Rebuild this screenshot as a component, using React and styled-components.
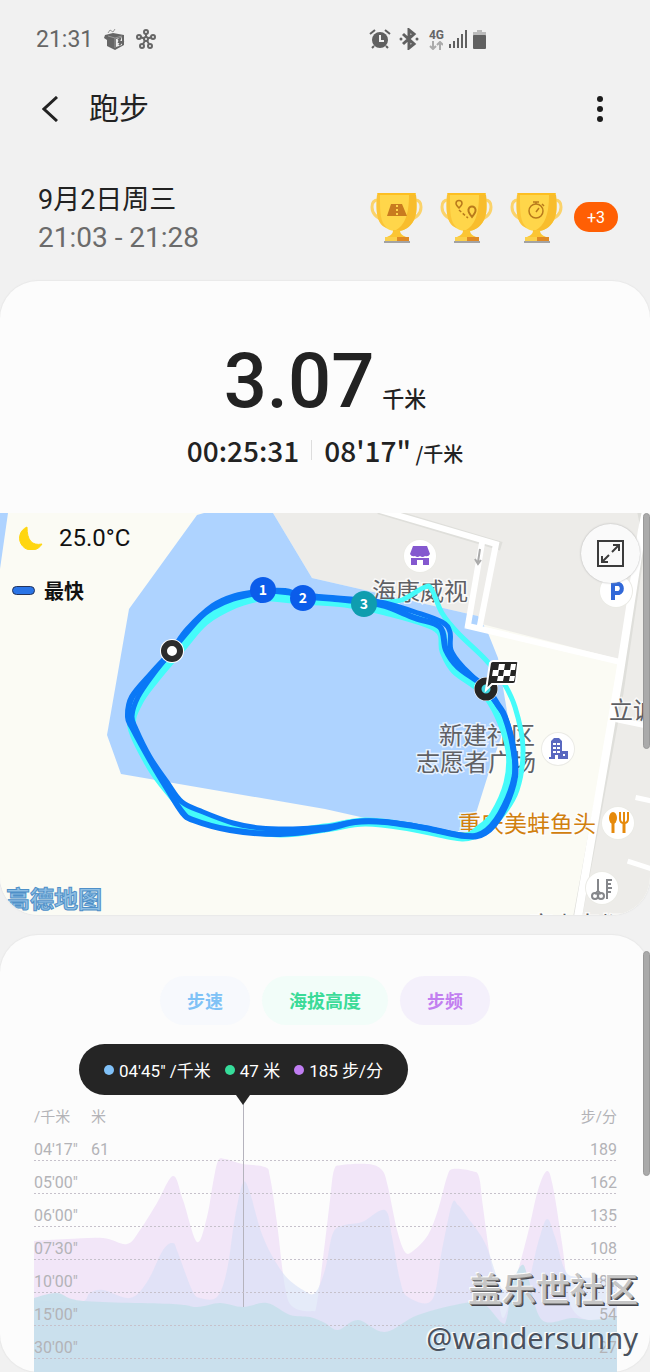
import React from 'react'
import styled, { createGlobalStyle } from 'styled-components'

const GlobalStyle = createGlobalStyle`
  * { box-sizing: border-box; }
  body {
    margin: 0;
    background: #f1f1f1;
    color: #222;
    font-family: Roboto, "Noto Sans CJK SC", sans-serif;
  }
  button { font-family: inherit; border: none; padding: 0; background: none; cursor: pointer; }
  h1, p { margin: 0; font-weight: 400; }
`

const Page = styled.main`
  position: relative;
  overflow: hidden;
`

const StatusBar = styled.div`
  display: flex;
  justify-content: space-between;
  align-items: center;
  padding: 24px 163px 0 36px;
  height: 54px;
  color: #666;
  font-size: 23px;
`

const StatusGroup = styled.div`
  display: flex;
  align-items: center;
  gap: ${({ $gap }) => $gap}px;
`

const Network = styled.span`
  display: flex;
  flex-direction: column;
  align-items: center;
  font-size: 12px;
  line-height: 12px;
  font-weight: 700;
  margin-left: 2px;
`

const Header = styled.header`
  display: flex;
  align-items: center;
  height: 60px;
  margin-top: 25px;
  padding: 0 36px;
`

const IconButton = styled.button`
  display: flex;
  align-items: center;
  justify-content: center;
  width: 28px;
  height: 40px;
`

const Title = styled.h1`
  flex: 1;
  margin-left: 25px;
  font-size: 30px;
  line-height: 46px;
`

const Summary = styled.section`
  display: flex;
  justify-content: space-between;
  align-items: center;
  margin-top: 42px;
  padding: 0 32px 0 38px;
`

const DateText = styled.p`
  font-size: 27px;
  line-height: 38px;
`

const TimeRange = styled.p`
  font-size: 28px;
  line-height: 38px;
  color: #6b6b6b;
`

const Awards = styled.div`
  display: flex;
  align-items: center;
  gap: 17px;
  margin-bottom: 4px;
`

const MoreAwards = styled.button`
  width: 44px;
  height: 30px;
  margin-left: -6px;
  border-radius: 15px;
  background: #ff5f04;
  color: #fff;
  font-size: 16px;
`

const Card = styled.section`
  position: relative;
  margin-top: ${({ $top }) => $top}px;
  border-radius: 38px;
  background: #fcfcfc;
  box-shadow: 0 0 1px 1px #e9e9e9;
`

const Result = styled.div`
  display: flex;
  flex-direction: column;
  align-items: center;
  height: 232px;
  padding-top: 58px;
`

const Distance = styled.p`
  display: flex;
  align-items: baseline;
  gap: 8px;
  font-size: 76px;
  line-height: 84px;
  font-weight: 500;
`

const Unit = styled.span`
  font-family: "Noto Sans CJK SC", sans-serif;
  font-size: ${({ $size }) => $size}px;
  line-height: 28px;
  font-weight: 500;
`

const Pace = styled.div`
  display: flex;
  align-items: baseline;
  margin-top: 9px;
  font-family: "Noto Sans CJK SC", sans-serif;
  font-size: 28px;
  line-height: 36px;
  font-weight: 500;
`

const Divider = styled.span`
  align-self: center;
  width: 1px;
  height: 20px;
  margin: 0 12px;
  background: #ddd;
`

const MapBox = styled.div`
  position: relative;
  height: 402px;
  overflow: hidden;
  border-radius: 0 0 38px 38px;
`

const MapCanvas = styled.svg`
  display: block;
  width: 100%;
  height: 100%;
  font-family: "Noto Sans CJK SC", sans-serif;
`

const Legend = styled.div`
  position: absolute;
  left: 12px;
  top: 10px;
  color: #111;
`

const Weather = styled.div`
  display: flex;
  align-items: center;
  gap: 16px;
  height: 30px;
  padding-left: 7px;
  font-size: 24px;
`

const Fastest = styled.div`
  display: flex;
  align-items: center;
  gap: 9px;
  height: 30px;
  margin-top: 22px;
  font-size: 20px;
  font-weight: 700;
`

const FastMark = styled.span`
  width: 23px;
  height: 9px;
  border: 1px solid #24345c;
  border-radius: 5px;
  background: #2a74e6;
`

const ExpandButton = styled.button`
  position: absolute;
  top: 11px;
  right: 10px;
  display: flex;
  align-items: center;
  justify-content: center;
  width: 59px;
  height: 59px;
  border-radius: 50%;
  background: #fafafa;
  box-shadow: 0 0 2px #aaa;
`

const ScrollThumb = styled.div`
  position: absolute;
  right: 0;
  top: ${({ $top }) => $top}px;
  width: 7px;
  height: ${({ $height }) => $height}px;
  border: 1px solid #999;
  border-radius: 4px;
  background: #aaa;
`

const Tabs = styled.div`
  display: flex;
  justify-content: center;
  gap: 12px;
  padding-top: 41px;
`

const Tab = styled.button`
  height: 49px;
  padding: 0 27px 2px;
  border-radius: 25px;
  font-size: 18px;
  font-weight: 700;
  color: ${({ $color }) => $color};
  background: ${({ $bg }) => $bg};
`

const Chart = styled.div`
  position: relative;
  margin: 19px 33px 0 34px;
  padding-top: 56px;
`

const Bubble = styled.div`
  position: absolute;
  left: 45px;
  top: 0;
  display: flex;
  align-items: center;
  justify-content: center;
  gap: 14px;
  width: 329px;
  height: 51px;
  border-radius: 26px;
  background: #252525;
  color: #fff;
  font-size: 17px;

  &::after {
    content: '';
    position: absolute;
    left: 157px;
    top: 51px;
    border: 7px solid transparent;
    border-top: 10px solid #252525;
    border-bottom: none;
  }
`

const Reading = styled.span`
  display: flex;
  align-items: center;
  gap: 5px;

  &::before {
    content: '';
    width: 10px;
    height: 10px;
    border-radius: 50%;
    background: ${({ $color }) => $color};
  }
`

const Plot = styled.div`
  display: grid;

  > * { grid-area: 1 / 1; }
`

const Areas = styled.svg`
  width: 100%;
  height: 272px;
`

const Scale = styled.div`
  position: relative;
  padding: 6px 0 13px;
  color: #b3b3b7;
  font-size: 16px;
`

const ScaleRow = styled.div`
  display: grid;
  grid-template-columns: 57px 1fr auto;
  align-items: end;
  height: 33px;
  padding-bottom: 1px;
  line-height: 20px;
  background: repeating-linear-gradient(to right, #c6c1cb 0 2px, transparent 2px 4px) bottom / 100% 1px no-repeat;
`

const UnitRow = styled(ScaleRow)`
  height: 22px;
  font-size: 15px;
  background: none;
`

const Watermark = styled.div`
  position: absolute;
  right: 12px;
  bottom: 12px;
  text-align: right;
`

const Community = styled.p`
  margin-bottom: 6px;
  font-family: "Noto Sans CJK SC", sans-serif;
  font-size: 34px;
  line-height: 44px;
  font-weight: 500;
  color: #c6c6c6;
  text-shadow: -1px -1px 0 #fff, 1px 1px 0 #777, 2px 2px 0 #43434a;
`

const Author = styled.p`
  font-family: "Noto Sans", sans-serif;
  font-size: 29px;
  line-height: 44px;
  color: #4a525e;
  text-shadow: -1px -1px 0 #fff, -2px -1px 0 #e8f2f8;
`

// smooth line through a list of points
const curve = (pts) => {
  let d = `M${pts[0][0]} ${pts[0][1]}`
  for (let i = 0; i < pts.length - 1; i++) {
    const a = pts[i - 1] || pts[i]
    const b = pts[i]
    const c = pts[i + 1]
    const e = pts[i + 2] || c
    d += `C${b[0] + (c[0] - a[0]) / 6} ${b[1] + (c[1] - a[1]) / 6} ${c[0] - (e[0] - b[0]) / 6} ${c[1] - (e[1] - b[1]) / 6} ${c[0]} ${c[1]}`
  }
  return d
}

const area = (pts) => `${curve(pts)}L583 272L0 272Z`

const cadence = [[0, 141], [33, 139], [69, 138], [93, 144], [106, 130], [123, 103], [139, 76], [149, 100], [163, 142], [173, 117], [179, 83], [184, 61], [191, 59], [209, 64], [231, 67], [236, 77], [243, 123], [251, 187], [259, 207], [278, 211], [283, 203], [291, 142], [296, 100], [300, 70], [308, 65], [334, 64], [348, 70], [354, 87], [363, 130], [371, 152], [379, 151], [394, 135], [404, 110], [413, 77], [419, 69], [438, 71], [445, 77], [449, 107], [456, 157], [463, 190], [468, 217], [473, 210], [481, 182], [494, 133], [504, 90], [513, 71], [519, 87], [528, 143], [534, 190], [539, 210], [554, 220], [583, 220]]
const speed = [[0, 200], [46, 202], [56, 193], [69, 190], [96, 198], [113, 182], [129, 150], [139, 143], [144, 153], [158, 190], [166, 198], [183, 197], [193, 170], [201, 117], [209, 83], [216, 93], [229, 137], [249, 173], [269, 190], [281, 193], [291, 170], [299, 133], [311, 125], [328, 122], [351, 110], [358, 137], [366, 180], [374, 197], [398, 200], [408, 150], [418, 104], [424, 105], [434, 118], [451, 143], [464, 180], [471, 190], [491, 190], [504, 143], [513, 119], [521, 137], [531, 170], [544, 177], [583, 178]]
const altitude = [[0, 198], [23, 193], [49, 201], [139, 204], [163, 207], [186, 203], [209, 207], [233, 203], [256, 215], [276, 217], [291, 223], [304, 230], [324, 220], [351, 232], [384, 215], [431, 203], [450, 204], [468, 223], [473, 217], [479, 183], [488, 165], [494, 177], [508, 220], [538, 218], [558, 220], [583, 217]]

const lapOne = [[262, 78], [235, 83], [213, 93], [187, 117], [172, 138], [152, 160], [132, 184], [128, 204], [133, 216], [150, 247], [168, 277], [182, 299], [193, 307], [230, 317], [280, 321], [325, 316], [355, 309], [385, 309], [425, 315], [465, 323], [485, 320], [502, 300], [515, 264], [513, 234], [505, 204], [498, 192], [485, 174], [458, 154], [446, 137], [440, 114], [415, 105], [385, 93], [364, 89], [335, 86], [303, 83], [285, 78], [262, 78]]
const lapTwo = [[262, 79], [233, 86], [213, 95], [200, 105], [176, 133], [152, 163], [138, 184], [132, 203], [136, 216], [150, 244], [167, 269], [182, 289], [203, 299], [233, 310], [260, 315], [293, 316], [325, 314], [365, 308], [410, 312], [460, 322], [482, 320], [500, 300], [514, 264], [513, 234], [505, 204], [485, 176], [462, 153], [451, 137], [450, 119], [442, 109], [415, 99], [385, 90], [364, 87], [325, 84], [300, 81], [262, 77]]
const lapSlow = [[262, 83], [235, 91], [205, 108], [182, 134], [155, 166], [138, 190], [132, 214], [150, 252], [168, 277], [190, 299], [230, 313], [280, 320], [325, 315], [365, 309], [410, 314], [462, 324], [480, 316], [494, 302], [508, 270], [510, 238], [499, 203], [483, 178], [455, 157], [444, 138], [437, 115], [385, 98], [345, 90], [303, 87], [262, 83]]
const detour = [[364, 92], [385, 89], [402, 87], [425, 74], [432, 77], [442, 100], [458, 120], [485, 146], [502, 167], [515, 194], [523, 235], [517, 277], [500, 305], [480, 322]]

const readings = [
  { color: '#80c1f8', text: '04\'45" /千米' },
  { color: '#36dc9a', text: '47 米' },
  { color: '#c07df2', text: '185 步/分' },
]

const tabs = [
  { name: '步速', color: '#7fc2f6', bg: '#f7f9fd' },
  { name: '海拔高度', color: '#3bdb98', bg: '#f2fdf9' },
  { name: '步频', color: '#c27ff0', bg: '#f4f0fb' },
]

const rows = [
  ['04\'17"', '61', '189'],
  ['05\'00"', '', '162'],
  ['06\'00"', '', '135'],
  ['07\'30"', '', '108'],
  ['10\'00"', '', '81'],
  ['15\'00"', '', '54'],
  ['30\'00"', '', '27'],
]

const Trophy = ({ children }) => (
  <svg width="53" height="51" viewBox="0 0 53 51">
    <path d="M8 8C3 8 2 12 2 15c0 7 5 11 12 13M45 8c5 0 6 4 6 7 0 7-5 11-12 13" fill="none" stroke="#fbd36b" strokeWidth="3" />
    <path d="M7 3C6 14 6 22 9 28 13 36 20 39 26.500 39 33 39 40 36 44 28 47 22 47 14 46 3Z" fill="#ffd64a" />
    <path d="M46 3H39C39 20 36 34 24 39 33 40 40 36 44 28 47 22 47 14 46 3Z" fill="#f8bd2d" />
    <path d="M7 3C6 22 7 33 17 36 10 30 10 20 10 3Z" fill="#fbc438" />
    <rect x="7" y="1" width="39" height="2" rx="1" fill="#fdbf22" />
    <path d="M23 38h7c0 4 2 5 6 7H17c4-2 6-3 6-7Z" fill="#fbc533" />
    <path d="M15 45h12v4H15Z" fill="#fbd04b" /><path d="M27 45h12v4H27Z" fill="#df8a26" />
    <path d="M14 49h26v2H14Z" fill="#a3a3a3" />
    {children}
  </svg>
)

const Poi = ({ x, y, children }) => (
  <g transform={`translate(${x} ${y})`}>
    <circle r="17" fill="#ebebe6" />
    <circle r="16" fill="#fff" />
    {children}
  </g>
)

const Lap = ({ x, y, n, fill }) => (
  <g>
    <circle cx={x} cy={y} r="13" fill={fill} />
    <text x={x} y={y + 5} textAnchor="middle" fontSize="14" fontWeight="700" fill="#fff">{n}</text>
  </g>
)

const RouteMap = () => (
  <MapCanvas viewBox="0 0 650 402" preserveAspectRatio="xMidYMid slice">
    <rect width="650" height="402" fill="#fbfbf4" />
    <path d="M273 0H650V402H577L622 147 478 110 478 103 312 65Z" fill="#edece9" />
    <path d="M0 0H8L0 56ZM197 2 204 0H273L312 65 478 103 488 120 498 145 508 204 488 262 477 297 470 323 365 305 325 296 121 261 107 222 129 96Z" fill="#aed3ff" />
    <g fill="none" strokeLinecap="square">
      <g stroke="#dfdfdb" strokeWidth="9">
        <path d="M383 -2 497 32" /><path d="M642 0 644 10 619 180 578 402" />
      </g>
      <g stroke="#fff" strokeWidth="6">
        <path d="M383 -2 496 31 480 112M482 30 468 112M468 113 620 149" />
        <path d="M652 -30 642 17 619 165 578 404" strokeWidth="8" />
        <path d="M618 207 652 214M638 285 652 288M630 349 652 356" strokeWidth="5" />
      </g>
    </g>
    <path d="M480 36 478 49M475 46 478 51 481 47" fill="none" stroke="#aaa" strokeWidth="2" />

    <Poi x={420} y={43}>
      <path d="M-7-10H7L10-2a4 4 0 0 1-5 2 4 4 0 0 1-5 0 4 4 0 0 1-5 0A4 4 0 0 1-10-2ZM-9 2H9V9H3V4H-3V9H-9Z" fill="#8458cf" />
    </Poi>
    <Poi x={616} y={78}>
      <path d="M-3 9V-7H3a5 5 0 0 1 0 9H-3" fill="none" stroke="#3168d8" strokeWidth="4" />
    </Poi>
    <Poi x={558} y={236}>
      <path d="M-7-8 -4-11H1L4-8V2H10V10H-9V8H-7Z" fill="#5968c0" />
      <path d="M-5-6h3v2h-3zM-1-6h3v2h-3zM-5-2h3v2h-3zM-1-2h3v2h-3zM-5 2h3v2h-3zM-1 2h3v2h-3zM-3 6h3v4h-3zM5 5h2v2H5z" fill="#fff" />
    </Poi>
    <Poi x={618} y={310}>
      <ellipse cx="-5" cy="-5" rx="4" ry="6" fill="#e68a0c" />
      <path d="M-5 0V10M6-1V10" stroke="#e68a0c" strokeWidth="3" />
      <path d="M2-11V-4Q2 0 6 0T10-4V-11M6-11V-1" fill="none" stroke="#e68a0c" strokeWidth="2" />
    </Poi>
    <Poi x={602} y={375}>
      <path d="M-4-9V4M-4 3-7 6M-4 3-1 6M5-9V11M5-8H10M5-4H9M5 0H10M5 4H9" fill="none" stroke="#85878b" strokeWidth="2" />
      <circle cx="-7" cy="8" r="3" fill="none" stroke="#85878b" strokeWidth="2" />
      <circle cx="-1" cy="8" r="3" fill="none" stroke="#85878b" strokeWidth="2" />
    </Poi>

    <g fontSize="24" fill="#5f6064" stroke="#fff" strokeWidth="3" strokeOpacity=".7" paintOrder="stroke">
      <text x="372" y="87">海康威视</text>
      <text x="609" y="206">立诚</text>
      <text x="439" y="231">新建社区</text>
      <text x="416" y="258">志愿者广场</text>
      <text x="530" y="420" fontSize="23">富山南都</text>
      <text x="458" y="319" fontSize="23" fill="#d1800f">重庆美蚌鱼头</text>
    </g>
    <text x="6" y="395" fontSize="24" fontWeight="700" fill="#8fbfe4" stroke="#4f90c8" strokeWidth="1">高德地图</text>

    <g fill="none" strokeLinejoin="round" strokeLinecap="round">
      <path d={curve(lapSlow)} stroke="#45fbfa" strokeWidth="9" />
      <path d={curve(detour)} stroke="#45fbfa" strokeWidth="5" />
      <path d={curve(lapOne)} stroke="#0a78f6" strokeWidth="6" />
      <path d={curve(lapTwo)} stroke="#0a78f6" strokeWidth="5" />
    </g>

    <circle cx="172" cy="138" r="12" fill="#fff" />
    <circle cx="172" cy="138" r="8" fill="#fff" stroke="#2c2c2c" strokeWidth="6" />
    <Lap x={263} y={77} n="1" fill="#0b5cea" />
    <Lap x={303} y={85} n="2" fill="#0b5cea" />
    <Lap x={364} y={91} n="3" fill="#0f9daf" />

    <circle cx="486" cy="176" r="12" fill="#fff" />
    <circle cx="486" cy="176" r="8" fill="#3fd5df" stroke="#252525" strokeWidth="7" />
    <path d="M486 177 490 150Q491 148 493 148H516Q519 148 518 151L516 168Q516 171 513 171H492Z" fill="#252525" stroke="#fff" strokeWidth="2" />
    <path d="M499 151h6l-1 6h-6zM511 151h5l-1 6h-5zM493 157h6l-1 6h-6zM504 157h7l-1 6h-7zM498 163h6l-1 5h-6zM510 163h5l-1 5h-5z" fill="#fff" />
  </MapCanvas>
)

const App = () => (
  <>
    <GlobalStyle />
    <Page>
      <StatusBar>
        <StatusGroup $gap={11}>
          <span>21:31</span>
          <svg width="21" height="23" viewBox="0 0 21 23">
            <path d="M1 7 9 5 20 7 20 17 11 22 3 18 3 12 0 10Z" fill="#666" />
            <path d="M12 11 18 9 18 17 12 19Z" fill="#eee" />
            <path d="M14 12 16 11 15 14 18 14 15 17" fill="none" stroke="#666" strokeWidth="2" />
            <path d="M4 8 11 10 18 8M11 10V20M4 5 6 2 9 4 11 1" fill="none" stroke="#999" strokeWidth="1" />
          </svg>
          <svg width="20" height="20" viewBox="0 0 20 20" fill="none" stroke="#666" strokeWidth="2">
            <path d="M10 10V4M10 10 4 8M10 10 16 8M10 10 7 15M10 10 13 15" />
            <circle cx="10" cy="10" r="2" fill="#f1f1f1" /><circle cx="10" cy="3" r="2" />
            <circle cx="3" cy="8" r="2" /><circle cx="17" cy="8" r="2" />
            <circle cx="6" cy="17" r="2" /><circle cx="14" cy="17" r="2" />
          </svg>
        </StatusGroup>
        <StatusGroup $gap={5}>
          <svg width="22" height="20" viewBox="0 0 22 20">
            <circle cx="11" cy="11" r="8" fill="#606060" />
            <path d="M5 17 3 19M17 17 19 19M1 5 6 1M21 5 16 1" stroke="#606060" strokeWidth="2" />
            <path d="M11 6V12H15" fill="none" stroke="#f1f1f1" strokeWidth="2" />
          </svg>
          <svg width="26" height="22" viewBox="0 0 26 22">
            <path d="M7 6 18 16 13 20V2L18 6 7 16" fill="none" stroke="#606060" strokeWidth="3" />
            <circle cx="5" cy="11" r="1.500" fill="#606060" /><circle cx="21" cy="11" r="1.500" fill="#606060" />
          </svg>
          <Network>
            4G
            <svg width="14" height="9" viewBox="0 0 14 9" fill="none" stroke="#aaa" strokeWidth="2">
              <path d="M4 0V8M1 5 4 8 7 5M11 9V1M8 4 11 1 14 4" />
            </svg>
          </Network>
          <svg width="18" height="18" viewBox="0 0 18 18" fill="#606060">
            <path d="M0 14h2v4H0zM4 11h2v7H4zM8 8h2v10H8zM12 4h2v14h-2zM16 0h2v18h-2z" />
          </svg>
          <svg width="15" height="20" viewBox="0 0 15 20">
            <path d="M5 1h5v2h4v5H1V3h4z" fill="#bbb" />
            <rect x="1" y="6" width="13" height="14" rx="1" fill="#606060" />
          </svg>
        </StatusGroup>
      </StatusBar>

      <Header>
        <IconButton aria-label="返回">
          <svg width="16" height="26" viewBox="0 0 16 26">
            <path d="M15 1 2 13 15 25" fill="none" stroke="#222" strokeWidth="3" />
          </svg>
        </IconButton>
        <Title>跑步</Title>
        <IconButton aria-label="更多">
          <svg width="6" height="26" viewBox="0 0 6 26" fill="#1c1c1c">
            <circle cx="3" cy="3" r="3" /><circle cx="3" cy="13" r="3" /><circle cx="3" cy="23" r="3" />
          </svg>
        </IconButton>
      </Header>

      <Summary>
        <div>
          <DateText>9月2日周三</DateText>
          <TimeRange>21:03 - 21:28</TimeRange>
        </div>
        <Awards>
          <Trophy>
            <path d="M21 12H32L37 24H17Z" fill="#c97b1f" />
            <path d="M27 13v2M27 17v2M27 21v2" stroke="#ffd64a" strokeWidth="2" />
          </Trophy>
          <Trophy>
            <g fill="none" stroke="#b97a1c" strokeWidth="1.500">
              <path d="M19 16Q16 13 16 11.500A3 3 0 0 1 22 11.500Q22 13 19 16Z" />
              <path d="M19 18 28 26" strokeDasharray="3 2" />
              <path d="M32 25Q28 20 28.500 18A3.500 3.500 0 0 1 35.500 18Q36 20 32 25Z" strokeWidth="2" />
            </g>
          </Trophy>
          <Trophy>
            <g fill="none" stroke="#b97a1c" strokeWidth="1.500">
              <circle cx="26" cy="19" r="7" />
              <path d="M26 20 29 16M23 10H29M26 10V12M32 12 34 14" />
            </g>
          </Trophy>
          <MoreAwards>+3</MoreAwards>
        </Awards>
      </Summary>

      <Card $top={24}>
        <Result>
          <Distance>3.07<Unit $size={22}>千米</Unit></Distance>
          <Pace>
            <span>00:25:31</span>
            <Divider />
            <span>08'17"</span>
            <Unit $size={20}>&nbsp;/千米</Unit>
          </Pace>
        </Result>
        <MapBox>
          <RouteMap />
          <Legend>
            <Weather>
              <svg width="24" height="24" viewBox="0 0 24 24">
                <path d="M8 1A12 12 0 1 0 23 18Q8 21 8 1Z" fill="#ffd610" stroke="#ffd610" strokeWidth="1" />
              </svg>
              25.0°C
            </Weather>
            <Fastest><FastMark />最快</Fastest>
          </Legend>
          <ExpandButton aria-label="展开地图">
            <svg width="27" height="27" viewBox="0 0 27 27" fill="none" stroke="#3c3c3c" strokeWidth="2">
              <rect x="1" y="1" width="25" height="25" />
              <path d="M15 12 22 5M16 5H22V11M12 15 5 22M5 16V22H11" />
            </svg>
          </ExpandButton>
          <ScrollThumb $top={0} $height={236} />
        </MapBox>
      </Card>

      <Card $top={20}>
        <Tabs>
          {tabs.map((t) => <Tab key={t.name} $color={t.color} $bg={t.bg}>{t.name}</Tab>)}
        </Tabs>
        <Chart>
          <Plot>
            <Areas viewBox="0 0 583 272" preserveAspectRatio="none">
              <path d={area(cadence)} fill="#f2e6f8" />
              <path d={area(speed)} fill="#d6dff7" fillOpacity=".6" />
              <path d={area(altitude)} fill="#c8e0eb" fillOpacity=".9" />
            </Areas>
            <Scale>
              <UnitRow><span>/千米</span><span>米</span><span>步/分</span></UnitRow>
              {rows.map(([pace, height, steps]) => (
                <ScaleRow key={pace}><span>{pace}</span><span>{height}</span><span>{steps}</span></ScaleRow>
              ))}
            </Scale>
            <Areas viewBox="0 0 583 272" preserveAspectRatio="none">
              <path d="M209.500 4V207" stroke="#b5b3bd" strokeWidth="1" />
            </Areas>
          </Plot>
          <Bubble>
            {readings.map((r) => <Reading key={r.text} $color={r.color}>{r.text}</Reading>)}
          </Bubble>
        </Chart>
        <ScrollThumb $top={16} $height={225} />
      </Card>

      <Watermark>
        <Community>盖乐世社区</Community>
        <Author>@wandersunny</Author>
      </Watermark>
    </Page>
  </>
)

export default App
